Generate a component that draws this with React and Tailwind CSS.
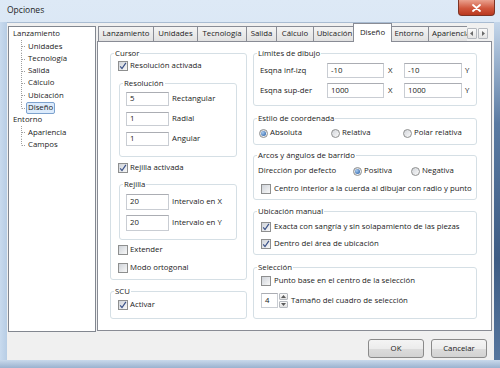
import React from "react";

const tree = [
  { label: "Lanzamiento", children: ["Unidades", "Tecnología", "Salida", "Cálculo", "Ubicación", "Diseño"] },
  { label: "Entorno", children: ["Apariencia", "Campos"] },
];

const tabs = [
  ["Lanzamiento", "w-[56px]"],
  ["Unidades", "w-[45px]"],
  ["Tecnología", "w-[50px]"],
  ["Salida", "w-[31px]"],
  ["Cálculo", "w-[38px]"],
  ["Ubicación", "w-[43px]"],
];

function Check({ checked }) {
  return (
    <span className="w-[10px] h-[10px] shrink-0 border border-[#8e8f8f] bg-[linear-gradient(135deg,#cfd3d9,#f8f8f8)] flex items-center justify-center">
      {checked && (
        <svg width="8" height="8" viewBox="0 0 8 8">
          <path d="M1.2 4.3 L3 6.6 L6.9 0.8" fill="none" stroke="#3b5288" strokeWidth="1.2" />
        </svg>
      )}
    </span>
  );
}

function CheckRow({ checked, label, className = "" }) {
  return (
    <div className={`flex items-center h-[12px] gap-[2px] ${className}`}>
      <Check checked={checked} />
      <span>{label}</span>
    </div>
  );
}

function Radio({ on, label, className = "" }) {
  return (
    <span className={`flex items-center gap-[2px] ${className}`}>
      <span className="w-[9px] h-[9px] shrink-0 rounded-full border border-[#8e8f8f] bg-[linear-gradient(135deg,#d2d5da,#fafafa)] flex items-center justify-center">
        {on && <span className="w-[5px] h-[5px] rounded-full bg-[radial-gradient(circle_at_35%_35%,#a8cbf0,#1d56a0)]" />}
      </span>
      <span>{label}</span>
    </span>
  );
}

function Group({ title, className = "", children }) {
  return (
    <fieldset className={`border border-[#d5dfe5] rounded-[3px] ${className}`}>
      <legend className="ml-[3px] px-[1px] leading-[10px]">{title}</legend>
      {children}
    </fieldset>
  );
}

function Field({ value, className = "" }) {
  return (
    <span className={`shrink-0 flex items-center pl-[3px] bg-white border border-[#c9cdd3] border-t-[#abadb3] ${className}`}>
      {value}
    </span>
  );
}

function TreeLine({ last }) {
  return (
    <svg width="13" height="12.3" className="shrink-0">
      <line x1="8.5" y1="0" x2="8.5" y2={last ? 6.5 : 12.3} stroke="#a0a0a0" strokeDasharray="1 1" />
      <line x1="9" y1="6.5" x2="13" y2="6.5" stroke="#a0a0a0" strokeDasharray="1 1" />
    </svg>
  );
}

function Tree() {
  return (
    <div className="mt-[3px] ml-[1px] w-[88px] h-[306px] shrink-0 bg-white border border-[#828790] pt-[1px] pl-[4px]">
      {tree.map((node) => (
        <div key={node.label}>
          <div className="h-[12.3px] flex items-center">{node.label}</div>
          {node.children.map((c, i) => (
            <div key={c} className="h-[12.3px] flex items-center">
              <TreeLine last={i === node.children.length - 1} />
              {c === "Diseño" ? (
                <span className="h-[12px] flex items-center px-[1px] border border-[#7da2ce] rounded-[2px] bg-[#dcebfc]">{c}</span>
              ) : (
                <span className="pl-[2px]">{c}</span>
              )}
            </div>
          ))}
        </div>
      ))}
    </div>
  );
}

function TabStrip() {
  return (
    <div className="h-[18px] ml-[1px] flex items-end relative z-10">
      {tabs.map(([t, w], i) => (
        <div
          key={t}
          className={`${w} ${i ? "-ml-px" : ""} h-[15px] flex items-center justify-center border border-b-0 border-[#898c95] bg-[linear-gradient(180deg,#f4f4f4,#e1e1e1)]`}
        >
          {t}
        </div>
      ))}
      <div className="w-[39px] h-[19px] -mb-px -mx-[3px] flex items-center justify-center border border-b-0 border-[#898c95] bg-white relative z-10">
        Diseño
      </div>
      <div className="w-[40px] h-[15px] flex items-center justify-center border border-b-0 border-[#898c95] bg-[linear-gradient(180deg,#f4f4f4,#e1e1e1)]">
        Entorno
      </div>
      <div className="w-[39px] h-[15px] -ml-px overflow-hidden">
        <div className="w-[52px] h-[15px] flex items-center pl-[3px] border border-b-0 border-[#898c95] bg-[linear-gradient(180deg,#f4f4f4,#e1e1e1)]">
          Apariencia
        </div>
      </div>
      <div className="self-start mt-[5px] flex gap-[1px]">
        <span className="w-[10px] h-[11px] border border-[#b5b9bf] rounded-[1px] bg-[linear-gradient(180deg,#fafafa,#e4e4e4)] flex items-center justify-center">
          <svg width="4" height="5" viewBox="0 0 4 5"><path d="M3 0 L0 2.5 L3 5 Z" fill="#6a6a6a" /></svg>
        </span>
        <span className="w-[10px] h-[11px] border border-[#b5b9bf] rounded-[1px] bg-[linear-gradient(180deg,#fafafa,#e4e4e4)] flex items-center justify-center">
          <svg width="4" height="5" viewBox="0 0 4 5"><path d="M1 0 L4 2.5 L1 5 Z" fill="#6a6a6a" /></svg>
        </span>
      </div>
    </div>
  );
}

function LeftColumn() {
  return (
    <div className="w-[137px] shrink-0 flex flex-col">
      <Group title="Cursor">
        <div className="pl-[7px] pr-[9px] pt-[2px] pb-[5px]">
          <CheckRow checked label="Resolución activada" />
          <Group title="Resolución" className="mt-[6px] ml-[1px]">
            <div className="pl-[6px] pt-[4px] pb-[10px] flex flex-col gap-[6px]">
              {[["5", "Rectangular"], ["1", "Radial"], ["1", "Angular"]].map(([v, l]) => (
                <div key={l} className="flex items-center gap-[3px]">
                  <Field value={v} className="w-[43px] h-[14px]" />
                  <span>{l}</span>
                </div>
              ))}
            </div>
          </Group>
          <CheckRow checked label="Rejilla activada" className="mt-[5px]" />
          <Group title="Rejilla" className="mt-[5px] ml-[1px]">
            <div className="pl-[6px] pt-[5px] pb-[8px] flex flex-col gap-[5px]">
              {["Intervalo en X", "Intervalo en Y"].map((l) => (
                <div key={l} className="flex items-center gap-[3px]">
                  <Field value="20" className="w-[43px] h-[16px]" />
                  <span>{l}</span>
                </div>
              ))}
            </div>
          </Group>
          <CheckRow label="Extender" className="mt-[4px]" />
          <CheckRow label="Modo ortogonal" className="mt-[6px]" />
        </div>
      </Group>
      <Group title="SCU" className="mt-[6px]">
        <div className="pl-[7px] pt-[3px] pb-[7px]">
          <CheckRow checked label="Activar" />
        </div>
      </Group>
    </div>
  );
}

function RightColumn() {
  return (
    <div className="w-[224px] shrink-0 flex flex-col">
      <Group title="Límites de dibujo">
        <div className="pl-[6px] pt-[5px] pb-[7px] flex flex-col gap-[5px]">
          {[["Esqna inf-izq", "-10", "-10"], ["Esqna sup-der", "1000", "1000"]].map(([l, a, b]) => (
            <div key={l} className="flex items-center">
              <span className="w-[67px]">{l}</span>
              <Field value={a} className="w-[57px] h-[15px]" />
              <span className="w-[20px] pl-[4px]">X</span>
              <Field value={b} className="w-[58px] h-[15px]" />
              <span className="pl-[3px]">Y</span>
            </div>
          ))}
        </div>
      </Group>
      <Group title="Estilo de coordenada" className="mt-[7px]">
        <div className="pl-[5px] pt-[4px] pb-[5px] flex items-center h-[12px] box-content">
          <Radio on label="Absoluta" className="w-[72px]" />
          <Radio label="Relativa" className="w-[72px]" />
          <Radio label="Polar relativa" />
        </div>
      </Group>
      <Group title="Arcos y ángulos de barrido" className="mt-[5px]">
        <div className="pl-[7px] pt-[5px] pb-[4px]">
          <div className="flex items-center h-[12px] -ml-[3px]">
            <span className="w-[95px]">Dirección por defecto</span>
            <Radio on label="Positiva" className="w-[58px]" />
            <Radio label="Negativa" />
          </div>
          <CheckRow label="Centro interior a la cuerda al dibujar con radio y punto" className="mt-[6px] gap-[3px]" />
        </div>
      </Group>
      <Group title="Ubicación manual" className="mt-[6px]">
        <div className="pl-[7px] pt-[5px] pb-[4px]">
          <CheckRow checked label="Exacta con sangría y sin solapamiento de las piezas" className="gap-[3px]" />
          <CheckRow checked label="Dentro del área de ubicación" className="mt-[5px] gap-[3px]" />
        </div>
      </Group>
      <Group title="Selección" className="mt-[7px]">
        <div className="pl-[7px] pt-[3px] pb-[10px]">
          <CheckRow label="Punto base en el centro de la selección" className="gap-[3px]" />
          <div className="mt-[6px] flex items-center h-[15px]">
            <Field value="4" className="w-[17px] h-[15px]" />
            <span className="ml-[1px] w-[9px] h-[15px] flex flex-col gap-px">
              <span className="flex-1 border border-[#b5b9bf] rounded-[1px] bg-[linear-gradient(180deg,#fafafa,#e2e2e2)] flex items-center justify-center">
                <svg width="5" height="3" viewBox="0 0 5 3"><path d="M0 3 L2.5 0 L5 3 Z" fill="#5a5a5a" /></svg>
              </span>
              <span className="flex-1 border border-[#b5b9bf] rounded-[1px] bg-[linear-gradient(180deg,#fafafa,#e2e2e2)] flex items-center justify-center">
                <svg width="5" height="3" viewBox="0 0 5 3"><path d="M0 0 L2.5 3 L5 0 Z" fill="#5a5a5a" /></svg>
              </span>
            </span>
            <span className="ml-[3px]">Tamaño del cuadro de selección</span>
          </div>
        </div>
      </Group>
    </div>
  );
}

function Button({ children }) {
  return (
    <div className="w-[56px] h-[19px] flex items-center justify-center border border-[#8a8a8a] rounded-[3px] bg-[linear-gradient(180deg,#f4f4f4_0%,#ececec_50%,#dcdcdc_51%,#d2d2d2_100%)]">
      {children}
    </div>
  );
}

export default function App() {
  return (
    <div className="w-[500px] h-[368px] flex flex-col overflow-hidden bg-[linear-gradient(180deg,#dde9f6,#c3d6eb)] text-[7.8px] text-[#1b1b1b] font-['Open_Sans','Noto_Sans',sans-serif]">
      <div className="h-[22px] shrink-0 flex items-start justify-between">
        <span className="mt-[4px] ml-[7px] text-[8.5px] text-[#1e1e1e]">Opciones</span>
        <div className="mr-[5px] w-[37px] h-[16px] rounded-b-[4px] border border-t-0 border-[#7d3324] bg-[linear-gradient(180deg,#eaa18e,#d0573d_55%,#b9381f)] flex items-center justify-center">
          <svg width="9" height="8" viewBox="0 0 9 8">
            <path d="M1 1 L8 7 M8 1 L1 7" stroke="#fff" strokeWidth="1.8" strokeLinecap="round" />
          </svg>
        </div>
      </div>
      <div className="flex-1 flex">
        <div className="w-[7px] shrink-0 bg-[linear-gradient(90deg,#c8daee,#b7cde5)]" />
        <div className="w-[487px] shrink-0 flex flex-col bg-[#f0f0f0] border-t border-[#a9bcd2]">
          <div className="h-[308px] flex">
            <Tree />
            <div className="ml-[1px] w-[395px] flex flex-col">
              <TabStrip />
              <div className="flex-1 flex gap-[6px] bg-white border border-[#898c95] pl-[12px] pt-[6px]">
                <LeftColumn />
                <RightColumn />
              </div>
            </div>
          </div>
          <div className="mt-[8px] pr-[7px] flex justify-end gap-[7px]">
            <Button>OK</Button>
            <Button>Cancelar</Button>
          </div>
        </div>
        <div className="flex-1 bg-[linear-gradient(180deg,#c4d6ea,#5a7aa2_30%,#3e5c84_70%,#56769e)]" />
      </div>
      <div className="h-[8px] shrink-0 bg-[linear-gradient(180deg,#c9d9eb,#9ab2cf)]" />
    </div>
  );
}
